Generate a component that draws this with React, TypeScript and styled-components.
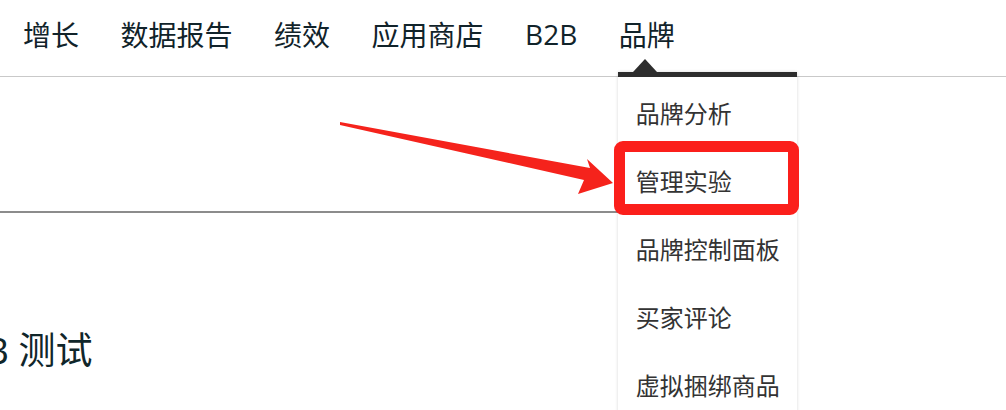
import React from "react";
import styled, { createGlobalStyle } from "styled-components";

const GlobalStyle = createGlobalStyle`
    html, body {
        margin: 0;
        padding: 0;
        background: #fff;
        overflow: hidden;
    }
    body {
        font-family: "Open Sans", "Noto Sans CJK SC", sans-serif;
    }
`;

const navItems = ["增长", "数据报告", "绩效", "应用商店", "B2B", "品牌"];
const brandMenu = ["品牌分析", "管理实验", "品牌控制面板", "买家评论", "虚拟捆绑商品"];

const App = () => {
    return (
        <Page>
            <GlobalStyle />
            <Nav>
                {navItems.map((label) => (
                    <NavItem key={label}>
                        {label}
                        {label === "品牌" && (
                            <Dropdown>
                                {brandMenu.map((item) => (
                                    <MenuItem key={item} $marked={item === "管理实验"}>
                                        {item}
                                    </MenuItem>
                                ))}
                            </Dropdown>
                        )}
                    </NavItem>
                ))}
            </Nav>
            <Main>
                <Section />
                <Heading>A/B 测试</Heading>
            </Main>
            <Arrow viewBox="0 0 1006 410">
                <polygon points="340,122 590,168 587,159 613,183 578,194 584,180 340,125" fill="#f5231c" />
            </Arrow>
        </Page>
    );
};

export default App;

const Page = styled.div`
    position: relative;
    width: 1006px;
    height: 410px;
    overflow: hidden;
`;

const Nav = styled.nav`
    height: 76px;
    display: flex;
    gap: 41.5px;
    padding-left: 23px;
    border-bottom: 1px solid #c9c9c9;
`;

const NavItem = styled.div`
    position: relative;
    display: flex;
    align-items: center;
    padding-bottom: 8px;
    font-size: 28px;
    color: #11232a;
`;

const Dropdown = styled.div`
    position: absolute;
    top: 72px;
    left: -1px;
    width: 179px;
    padding-top: 1px;
    background: #fff;
    border-top: 5px solid #2d2d2d;
    box-shadow: 0 0 3px rgba(0, 0, 0, 0.16);
    z-index: 2;

    &::before {
        content: "";
        position: absolute;
        top: -18px;
        left: 15px;
        border-left: 12px solid transparent;
        border-right: 12px solid transparent;
        border-bottom: 13px solid #2d2d2d;
    }
`;

const MenuItem = styled.div<{ $marked?: boolean }>`
    position: relative;
    height: 68px;
    display: flex;
    align-items: center;
    padding-left: 18px;
    font-size: 24px;
    color: #333;

    &::after {
        content: "";
        display: ${(props) => (props.$marked ? "block" : "none")};
        position: absolute;
        top: -5px;
        left: -4px;
        right: -2px;
        bottom: -1px;
        border: 11px solid #fb1f1b;
        border-radius: 9px;
    }
`;

const Main = styled.main`
    display: flex;
    flex-direction: column;
`;

const Section = styled.div`
    width: 700px;
    height: 134px;
    border-bottom: 2px solid #8c8c8c;
`;

const Heading = styled.h1`
    margin: 115px 0 0 -52px;
    font-size: 37px;
    font-weight: 400;
    line-height: 44px;
    color: #10262a;
`;

const Arrow = styled.svg`
    position: absolute;
    top: 0;
    left: 0;
    width: 1006px;
    height: 410px;
    pointer-events: none;
    z-index: 3;
`;
